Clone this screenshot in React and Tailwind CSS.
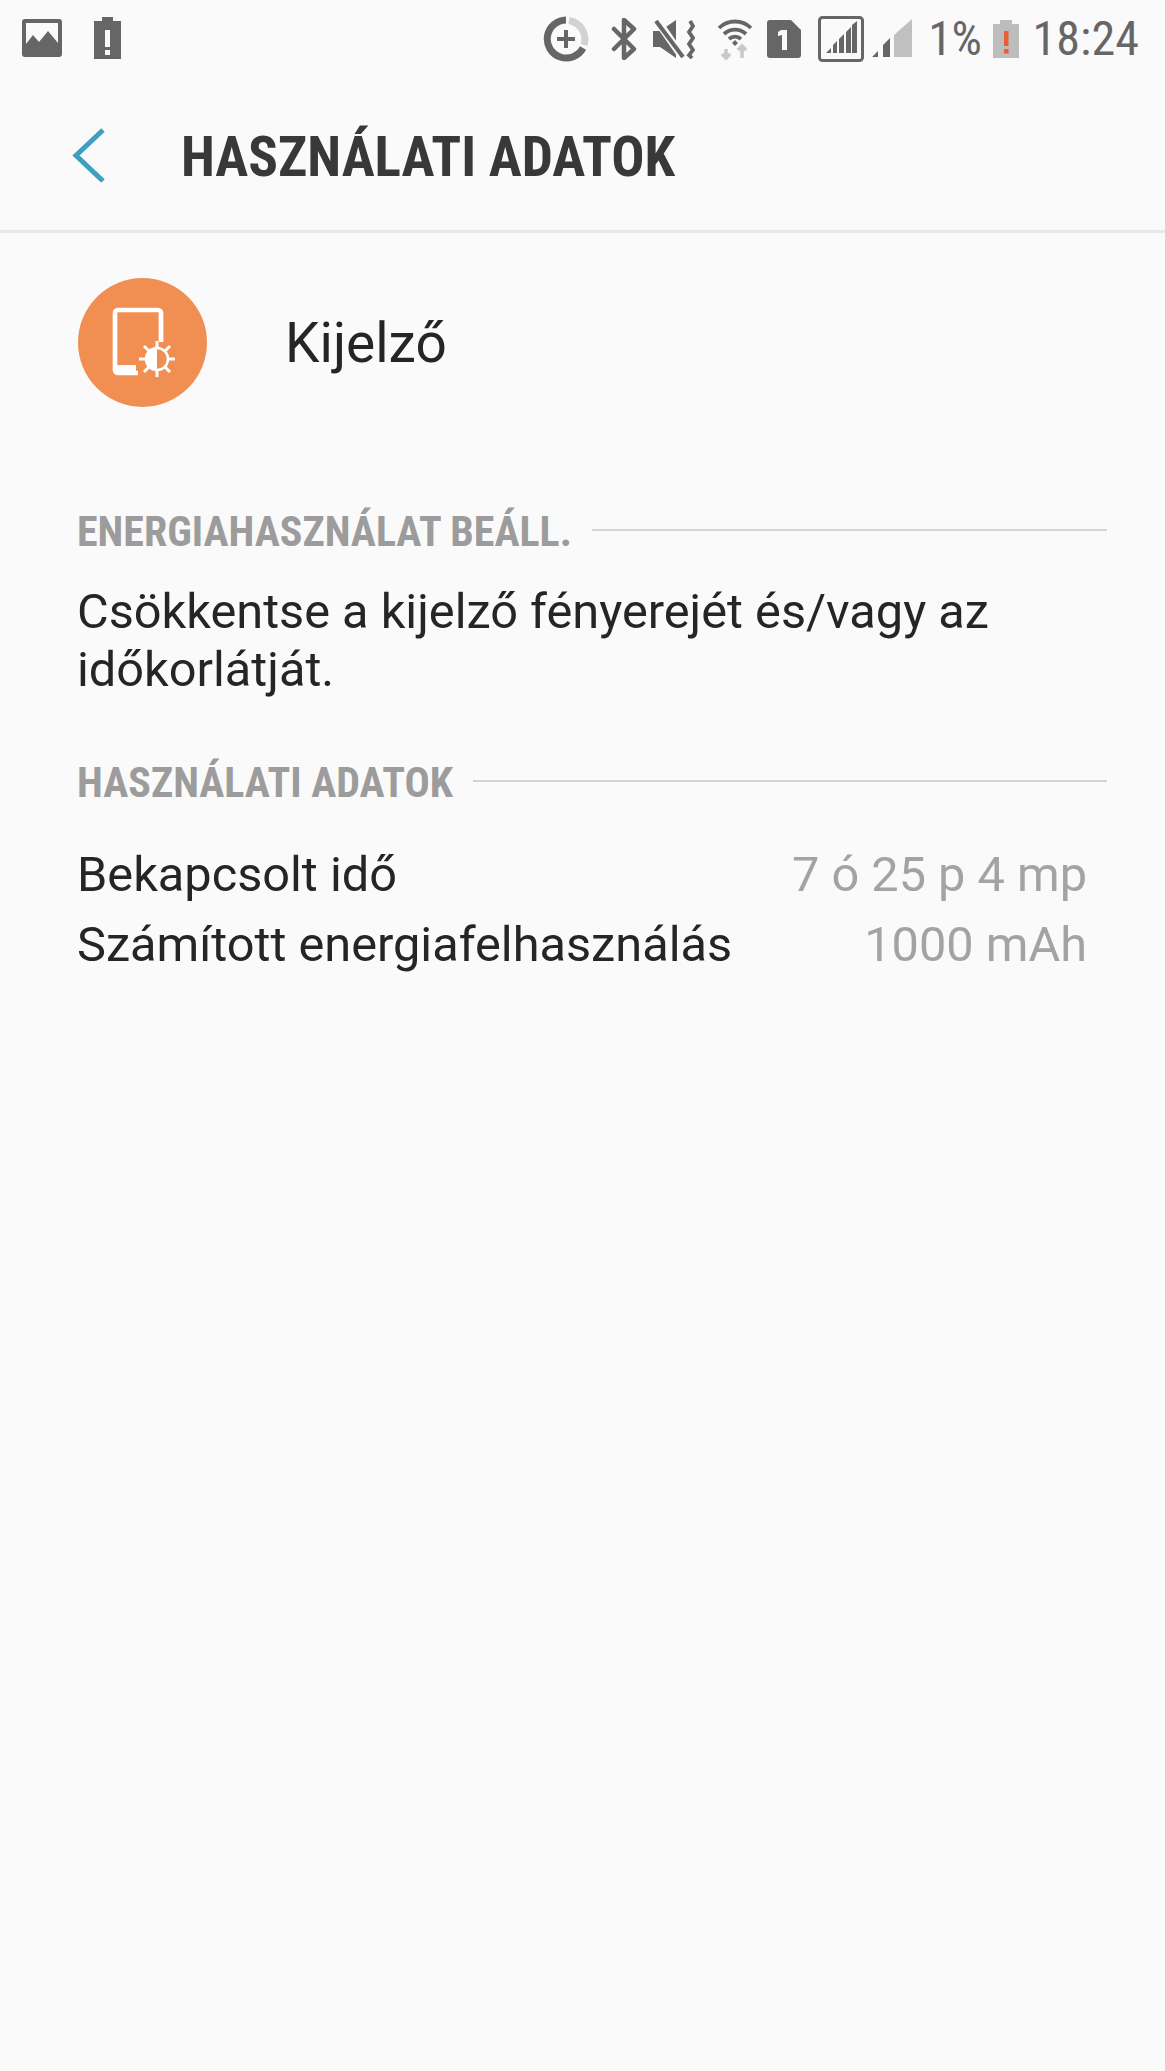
const Img = () => (
  <svg width="40" height="38" viewBox="0 0 40 38" fill="#666"><path fillRule="evenodd" d="M3 0h34a3 3 0 0 1 3 3v32a3 3 0 0 1-3 3H3a3 3 0 0 1-3-3V3a3 3 0 0 1 3-3zM4 4v21l7-9 6 7 9-11 10 12V4z"/></svg>
);
const BatAlert = () => (
  <svg width="27" height="42" viewBox="0 0 27 42" fill="#666"><path fillRule="evenodd" d="M8 0h11v4h8v38H0V4h8zM11 13v17h5V13zM11 33v5h5v-5z"/></svg>
);
const Sync = () => (
  <svg width="46" height="46" viewBox="0 0 46 46" fill="none">
    <path d="M26 4.500A19 19 0 0 1 41 29" stroke="#d2d2d2" strokeWidth="7"/>
    <path d="M23 4a19 19 0 1 0 17 28" stroke="#666" strokeWidth="7"/>
    <path d="M14 23h18M23 14v18" stroke="#666" strokeWidth="4"/>
  </svg>
);
const Bt = () => (
  <svg width="26" height="42" viewBox="0 0 26 42" fill="none" stroke="#666" strokeWidth="4.500" strokeLinejoin="round" strokeLinecap="round"><path d="M3 11l20 20-10 9V2l10 9-20 20"/></svg>
);
const Mute = () => (
  <svg width="42" height="40" viewBox="0 0 42 40"><path fill="#666" d="M0 12h7L23 1v38L7 28H0z"/><path d="M3 0l28 40" stroke="#fafafa" strokeWidth="8"/><path d="M3 2l27 36" stroke="#666" strokeWidth="4"/><path d="M37 2l3 5-4 6 4 6-4 6 4 6-4 5 3 3" stroke="#666" strokeWidth="3.8" fill="none"/></svg>
);
const Wifi = () => (
  <svg width="36" height="42" viewBox="0 0 36 42" fill="none"><path d="M2 10a23 23 0 0 1 32 0M7 16a16 16 0 0 1 22 0M12 21a9 9 0 0 1 12 0" stroke="#666" strokeWidth="3.800"/><path d="M15 25l3-3 3 3-3 3z" fill="#666"/><path d="M9 31v9M5 36l4 4 4-4" stroke="#c8c8c8" strokeWidth="3.500"/><path d="M25 40v-12M21 32l4-4 4 4" stroke="#c8c8c8" strokeWidth="3.500"/></svg>
);
const Sim = () => (
  <svg width="34" height="38" viewBox="0 0 34 38"><path fill="#666" d="M3 0h21l10 10v25a3 3 0 0 1-3 3H3a3 3 0 0 1-3-3V3a3 3 0 0 1 3-3z"/><path fill="#fafafa" d="M14 10h6v20h-5V15l-4 1v-4z"/></svg>
);
const Signal = () => (
  <svg width="46" height="46" viewBox="0 0 46 46"><rect x="1.5" y="1.5" width="43" height="43" rx="3" fill="none" stroke="#666" strokeWidth="3"/><path fill="#666" d="M8 37l5-5v5zM15 37v-8l4-4v12zM21 37V23l5-5v19zM28 37V16l5-5v26zM34 37V9l5-4v32z"/></svg>
);
const Signal2 = () => (
  <svg width="40" height="40" viewBox="0 0 40 40"><path fill="#666" d="M0 38l6-6v6zM11 38V26l7-7v19z"/><path fill="#c0c0c0" d="M22 38V16L40 0v38z"/></svg>
);
const BatLow = () => (
  <svg width="26" height="38" viewBox="0 0 26 38"><path fill="#bdbdbd" d="M7 0h12v4h7v34H0V4h7z"/><path fill="#e85f33" d="M11 11h4.500v15H11zM11 29h4.500v4.500H11z"/></svg>
);
const Display = () => (
  <svg width="64" height="72" viewBox="0 0 64 72" fill="none" className="ml-[2px]">
    <path d="M26 66H6a3 3 0 0 1-3-3V6a3 3 0 0 1 3-3h40a3 3 0 0 1 3 3v29" stroke="#fff" strokeWidth="4.700"/>
    <path d="M3 58h21v10H5l-2-2z" fill="#fff"/>
    <circle cx="45" cy="52" r="11" stroke="#fff" strokeWidth="2.500"/>
    <path d="M45 41a11 11 0 0 0 0 22z" fill="#fff"/>
    <path d="M45 34v7M45 63v7M27 52h7M56 52h7M32 39l5 5M53 60l5 5M58 39l-5 5M37 60l-5 5" stroke="#fff" strokeWidth="3"/>
  </svg>
);

export default function App() {
  return (
    <div className="w-[1165px] h-[2071px] bg-[#fafafa] overflow-hidden font-['Roboto',sans-serif]">
      <div className="h-[78px] pl-[22px] pr-[26px] flex items-center justify-between">
        <div className="flex items-center gap-[32px] mt-[-2px]">
          <Img />
          <BatAlert />
        </div>
        <div className="flex items-center text-[#666]">
          <Sync />
          <div className="ml-[22px]"><Bt /></div>
          <div className="ml-[16px]"><Mute /></div>
          <div className="ml-[22px]"><Wifi /></div>
          <div className="ml-[14px]"><Sim /></div>
          <div className="ml-[17px]"><Signal /></div>
          <div className="ml-[8px]"><Signal2 /></div>
          <span className="ml-[16px] text-[48px] leading-none [font-stretch:75%] tracking-[-0.4px]">1%</span>
          <div className="ml-[11px]"><BatLow /></div>
          <span className="ml-[14px] text-[48px] leading-none [font-stretch:75%] tracking-[0.1px]">18:24</span>
        </div>
      </div>
      <div className="h-[155px] pl-[70px] flex items-center border-b-[3px] border-[#e8e8e8]">
        <svg width="38" height="54" viewBox="0 0 38 54" fill="none" className="mt-[2px]"><path d="M33 2L6 27.500 33 53" stroke="#3f9fc0" strokeWidth="5"/></svg>
        <h1 className="ml-[73px] mt-[6px] text-[55.2px] leading-[60px] font-bold text-[#383838] [font-stretch:75%] whitespace-nowrap">HASZNÁLATI ADATOK</h1>
      </div>
      <div className="pl-[78px] pr-[58px]">
        <div className="flex items-center mt-[45px]">
          <div className="w-[129px] h-[129px] rounded-full bg-[#f18f52] flex items-center justify-center">
            <Display />
          </div>
          <span className="ml-[78px] text-[55px] leading-[64px] text-[#252525]">Kijelző</span>
        </div>
        <div className="flex items-center mt-[102px] -ml-[1px]">
          <span className="text-[42px] leading-[46px] font-bold text-[#9c9c9c] [font-stretch:75%] whitespace-nowrap">ENERGIAHASZNÁLAT BEÁLL.</span>
          <div className="flex-1 h-[2px] bg-[#d4d4d4] ml-[20px] mt-[-5px]" />
        </div>
        <p className="mt-[28px] -ml-[1px] text-[48.7px] leading-[58px] text-[#252525]">Csökkentse a kijelző fényerejét és/vagy az időkorlátját.</p>
        <div className="flex items-center mt-[61px] -ml-[1px]">
          <span className="text-[42px] leading-[46px] font-bold text-[#9c9c9c] [font-stretch:75%] whitespace-nowrap">HASZNÁLATI ADATOK</span>
          <div className="flex-1 h-[2px] bg-[#d4d4d4] ml-[20px] mt-[-5px]" />
        </div>
        <div className="mt-[34px] -ml-[1px] pr-[20px] text-[48.7px] leading-[70px]">
          <div className="flex justify-between"><span className="text-[#252525]">Bekapcsolt idő</span><span className="text-[#a3a3a3]">7 ó 25 p 4 mp</span></div>
          <div className="flex justify-between"><span className="text-[#252525]">Számított energiafelhasználás</span><span className="text-[#a3a3a3]">1000 mAh</span></div>
        </div>
      </div>
    </div>
  );
}
